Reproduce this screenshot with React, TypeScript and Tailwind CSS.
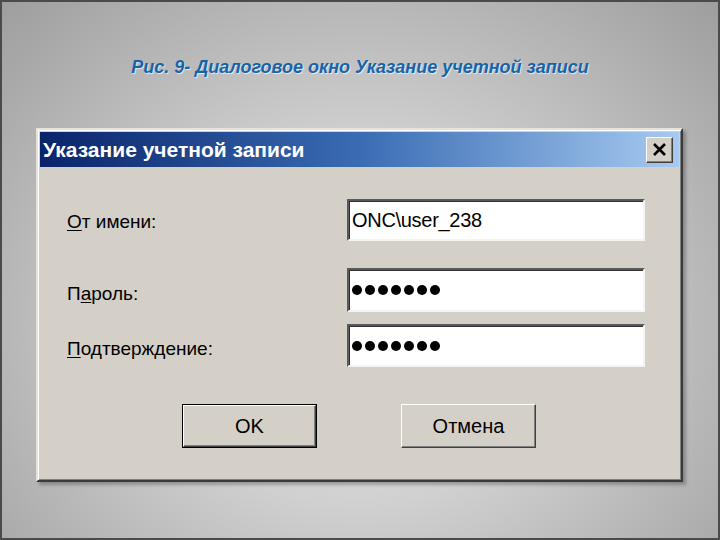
import React from 'react';

const ui = { fontFamily: '"Liberation Sans", Arial, sans-serif' };

const Field: React.FC<{ h: string; children: React.ReactNode }> = ({ h, children }) => (
  <div
    className={`w-[298px] ${h} flex items-center bg-white border-2 border-t-[#5a5a5a] border-l-[#5a5a5a] border-b-[#f4f4f0] border-r-[#f4f4f0] shadow-[inset_1px_1px_#303030] pl-[3px]`}
  >
    {children}
  </div>
);

const Dots: React.FC = () => (
  <div className="flex gap-[3px]">
    {Array.from({ length: 7 }).map((_, i) => (
      <span key={i} className="w-[10px] h-[10px] rounded-full bg-black" />
    ))}
  </div>
);

export default function App() {
  return (
    <div
      className="w-[720px] h-[540px] border-2 border-[#4a4a4a] bg-[radial-gradient(ellipse_at_50%_60%,#eaeaea_0%,#d0d0d0_40%,#9e9e9e_100%)] flex flex-col"
      style={ui}
    >
      {/* подпись */}
      <div className="pt-[52px] h-[126px] text-center">
        <span className="text-[18px] font-bold italic text-[#1763a8] [text-shadow:1px_1px_1px_rgba(255,255,255,0.7)]">
          Рис. 9- Диалоговое окно Указание учетной записи
        </span>
      </div>

      {/* окно */}
      <div className="ml-[34px] w-[647px] h-[354px] bg-[#d4d0c8] border-2 border-t-[#e6e3dc] border-l-[#e6e3dc] border-r-[#3a3a3a] border-b-[#3a3a3a] shadow-[inset_1px_1px_#ffffff,inset_-1px_-1px_#808080,3px_3px_3px_rgba(0,0,0,0.25)] p-[2px] flex flex-col">
        {/* заголовок */}
        <div className="h-[35px] flex items-center justify-between pl-[3px] pr-[6px] bg-[linear-gradient(90deg,#0a246a_0%,#3a6cb4_50%,#a6caf0_100%)]">
          <span className="text-white font-bold text-[21px]">Указание учетной записи</span>
          <div className="w-[27px] h-[26px] flex items-center justify-center bg-[#d4d0c8] border border-t-white border-l-white border-r-[#404040] border-b-[#404040] shadow-[inset_-1px_-1px_#808080]">
            <svg width="15" height="13" viewBox="0 0 15 13">
              <path d="M2 1 L13 12 M13 1 L2 12" stroke="#000" strokeWidth="2.6" />
            </svg>
          </div>
        </div>

        {/* поля */}
        <div className="flex flex-col pl-[27px] pt-[32px] text-[19px] text-black">
          <div className="flex items-center">
            <span className="w-[280px] mt-[4px]">
              <u className="decoration-1 underline-offset-2">О</u>т имени:
            </span>
            <Field h="h-[42px]">
              <span className="text-[20px] tracking-[-0.3px]">ONC\user_238</span>
            </Field>
          </div>
          <div className="flex items-center mt-[27px]">
            <span className="w-[280px] mt-[8px]">
              П<u className="decoration-1 underline-offset-2">а</u>роль:
            </span>
            <Field h="h-[44px]">
              <Dots />
            </Field>
          </div>
          <div className="flex items-center mt-[12px]">
            <span className="w-[280px] mt-[8px]">
              <u className="decoration-1 underline-offset-2">П</u>одтверждение:
            </span>
            <Field h="h-[43px]">
              <Dots />
            </Field>
          </div>
        </div>

        {/* кнопки */}
        <div className="flex pl-[142px] gap-[84px] mt-[37px] text-[20px]">
          <div className="w-[135px] h-[44px] border border-black">
            <div className="w-full h-full flex items-center justify-center border border-t-white border-l-white border-r-[#404040] border-b-[#404040] shadow-[inset_-1px_-1px_#808080]">
              OK
            </div>
          </div>
          <div className="w-[135px] h-[44px] flex items-center justify-center border border-t-white border-l-white border-r-[#404040] border-b-[#404040] shadow-[inset_-1px_-1px_#808080]">
            Отмена
          </div>
        </div>
      </div>
    </div>
  );
}
